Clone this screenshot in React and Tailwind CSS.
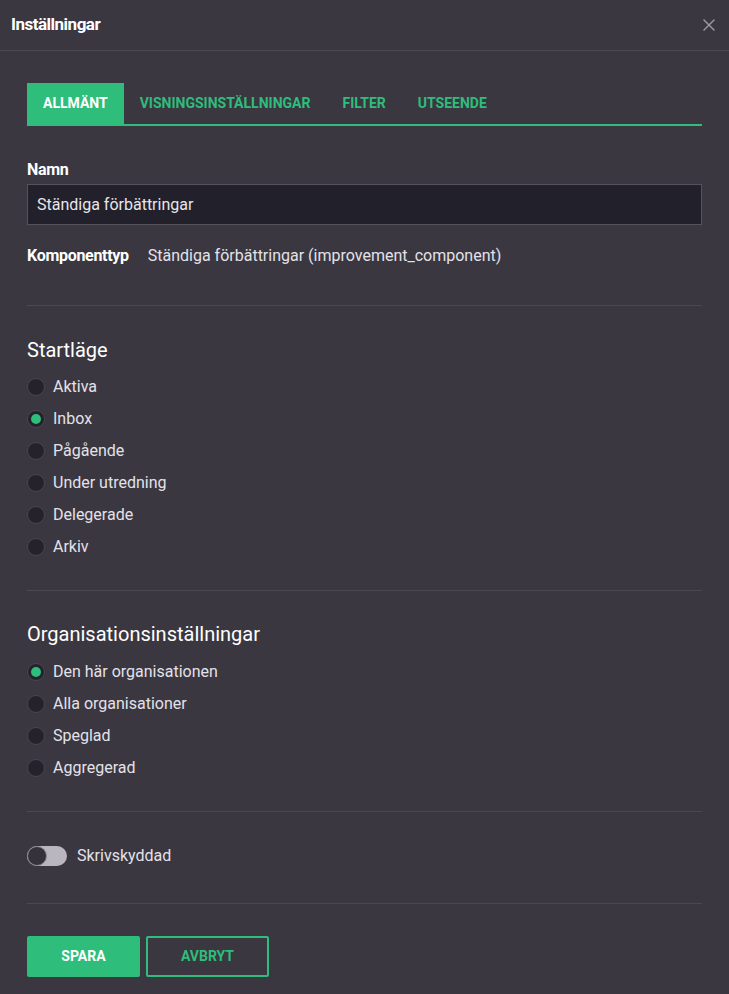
import { X } from "lucide-react";

const startModes = ["Aktiva", "Inbox", "Pågående", "Under utredning", "Delegerade", "Arkiv"];
const orgModes = ["Den här organisationen", "Alla organisationer", "Speglad", "Aggregerad"];

function Radio({ label, checked }) {
  return (
    <label className="flex items-center h-8 gap-[8px] cursor-pointer">
      <span className="w-[18px] h-[18px] rounded-full bg-[#25222c] border border-[#4a4652] flex items-center justify-center">
        {checked && <span className="w-[10px] h-[10px] rounded-full bg-[#2ebd7a]" />}
      </span>
      <span className="text-[16px] text-[#e4e2e8]">{label}</span>
    </label>
  );
}

export default function App() {
  const tabs = ["ALLMÄNT", "VISNINGSINSTÄLLNINGAR", "FILTER", "UTSEENDE"];

  return (
    <div className="w-[729px] h-[994px] bg-[#3a3741] text-[#e6e4ea] font-['Roboto',sans-serif] flex flex-col">
      <div className="h-[51px] flex items-center justify-between pl-[11px] pr-[10px] border-b border-[#4b4852]">
        <h1 className="text-[17px] font-bold text-white tracking-[-0.5px]">Inställningar</h1>
        <X className="w-5 h-5 text-[#9b98a2]" strokeWidth={1.8} />
      </div>

      <div className="px-[27px] pt-[32px] flex flex-col">
        <div className="flex border-b-2 border-[#2ebd7a]">
          {tabs.map((t, i) => (
            <div
              key={t}
              className={
                i === 0
                  ? "h-[41px] px-4 flex items-center bg-[#2ebd7a] text-white text-[14px] font-bold"
                  : "h-[41px] px-4 flex items-center text-[#2ebd7a] text-[14px] font-bold"
              }
            >
              {t}
            </div>
          ))}
        </div>

        <div className="mt-[36px] text-[16px] font-bold text-white tracking-[-0.3px] leading-none">Namn</div>
        <div className="mt-[6px] h-[41px] bg-[#22202a] border border-[#55525c] flex items-center px-[9px] text-[16px] text-[#e8e6ec]">
          Ständiga förbättringar
        </div>

        <div className="mt-[19px] flex items-center gap-[19px] text-[16px] leading-6">
          <span className="font-bold text-white tracking-[-0.3px]">Komponenttyp</span>
          <span className="text-[#e4e2e8]">Ständiga förbättringar (improvement_component)</span>
        </div>

        <div className="mt-[37px] border-t border-[#4b4852]" />

        <h2 className="mt-[34px] text-[20px] text-white leading-none">Startläge</h2>
        <div className="mt-[11px] flex flex-col">
          {startModes.map((m) => (
            <Radio key={m} label={m} checked={m === "Inbox"} />
          ))}
        </div>

        <div className="mt-[27px] border-t border-[#4b4852]" />

        <h2 className="mt-[33px] text-[20px] text-white leading-none">Organisationsinställningar</h2>
        <div className="mt-[12px] flex flex-col">
          {orgModes.map((m) => (
            <Radio key={m} label={m} checked={m === "Den här organisationen"} />
          ))}
        </div>

        <div className="mt-[27px] border-t border-[#4b4852]" />

        <div className="mt-[32px] flex items-center gap-[10px] h-6">
          <div className="w-[40px] h-[20px] rounded-full bg-[#b9b6c0] flex items-center">
            <span className="w-[20px] h-[20px] rounded-full bg-[#35323b] border border-[#8d8a94]" />
          </div>
          <span className="text-[16px] text-[#e4e2e8]">Skrivskyddad</span>
        </div>

        <div className="mt-[35px] border-t border-[#4b4852]" />

        <div className="mt-[32px] flex gap-[6px]">
          <button className="w-[113px] h-[41px] bg-[#2ebd7a] text-white text-[14px] font-bold rounded-[2px]">
            SPARA
          </button>
          <button className="w-[123px] h-[41px] border-2 border-[#2ebd7a] text-[#2ebd7a] text-[14px] font-bold rounded-[2px]">
            AVBRYT
          </button>
        </div>
      </div>
    </div>
  );
}
